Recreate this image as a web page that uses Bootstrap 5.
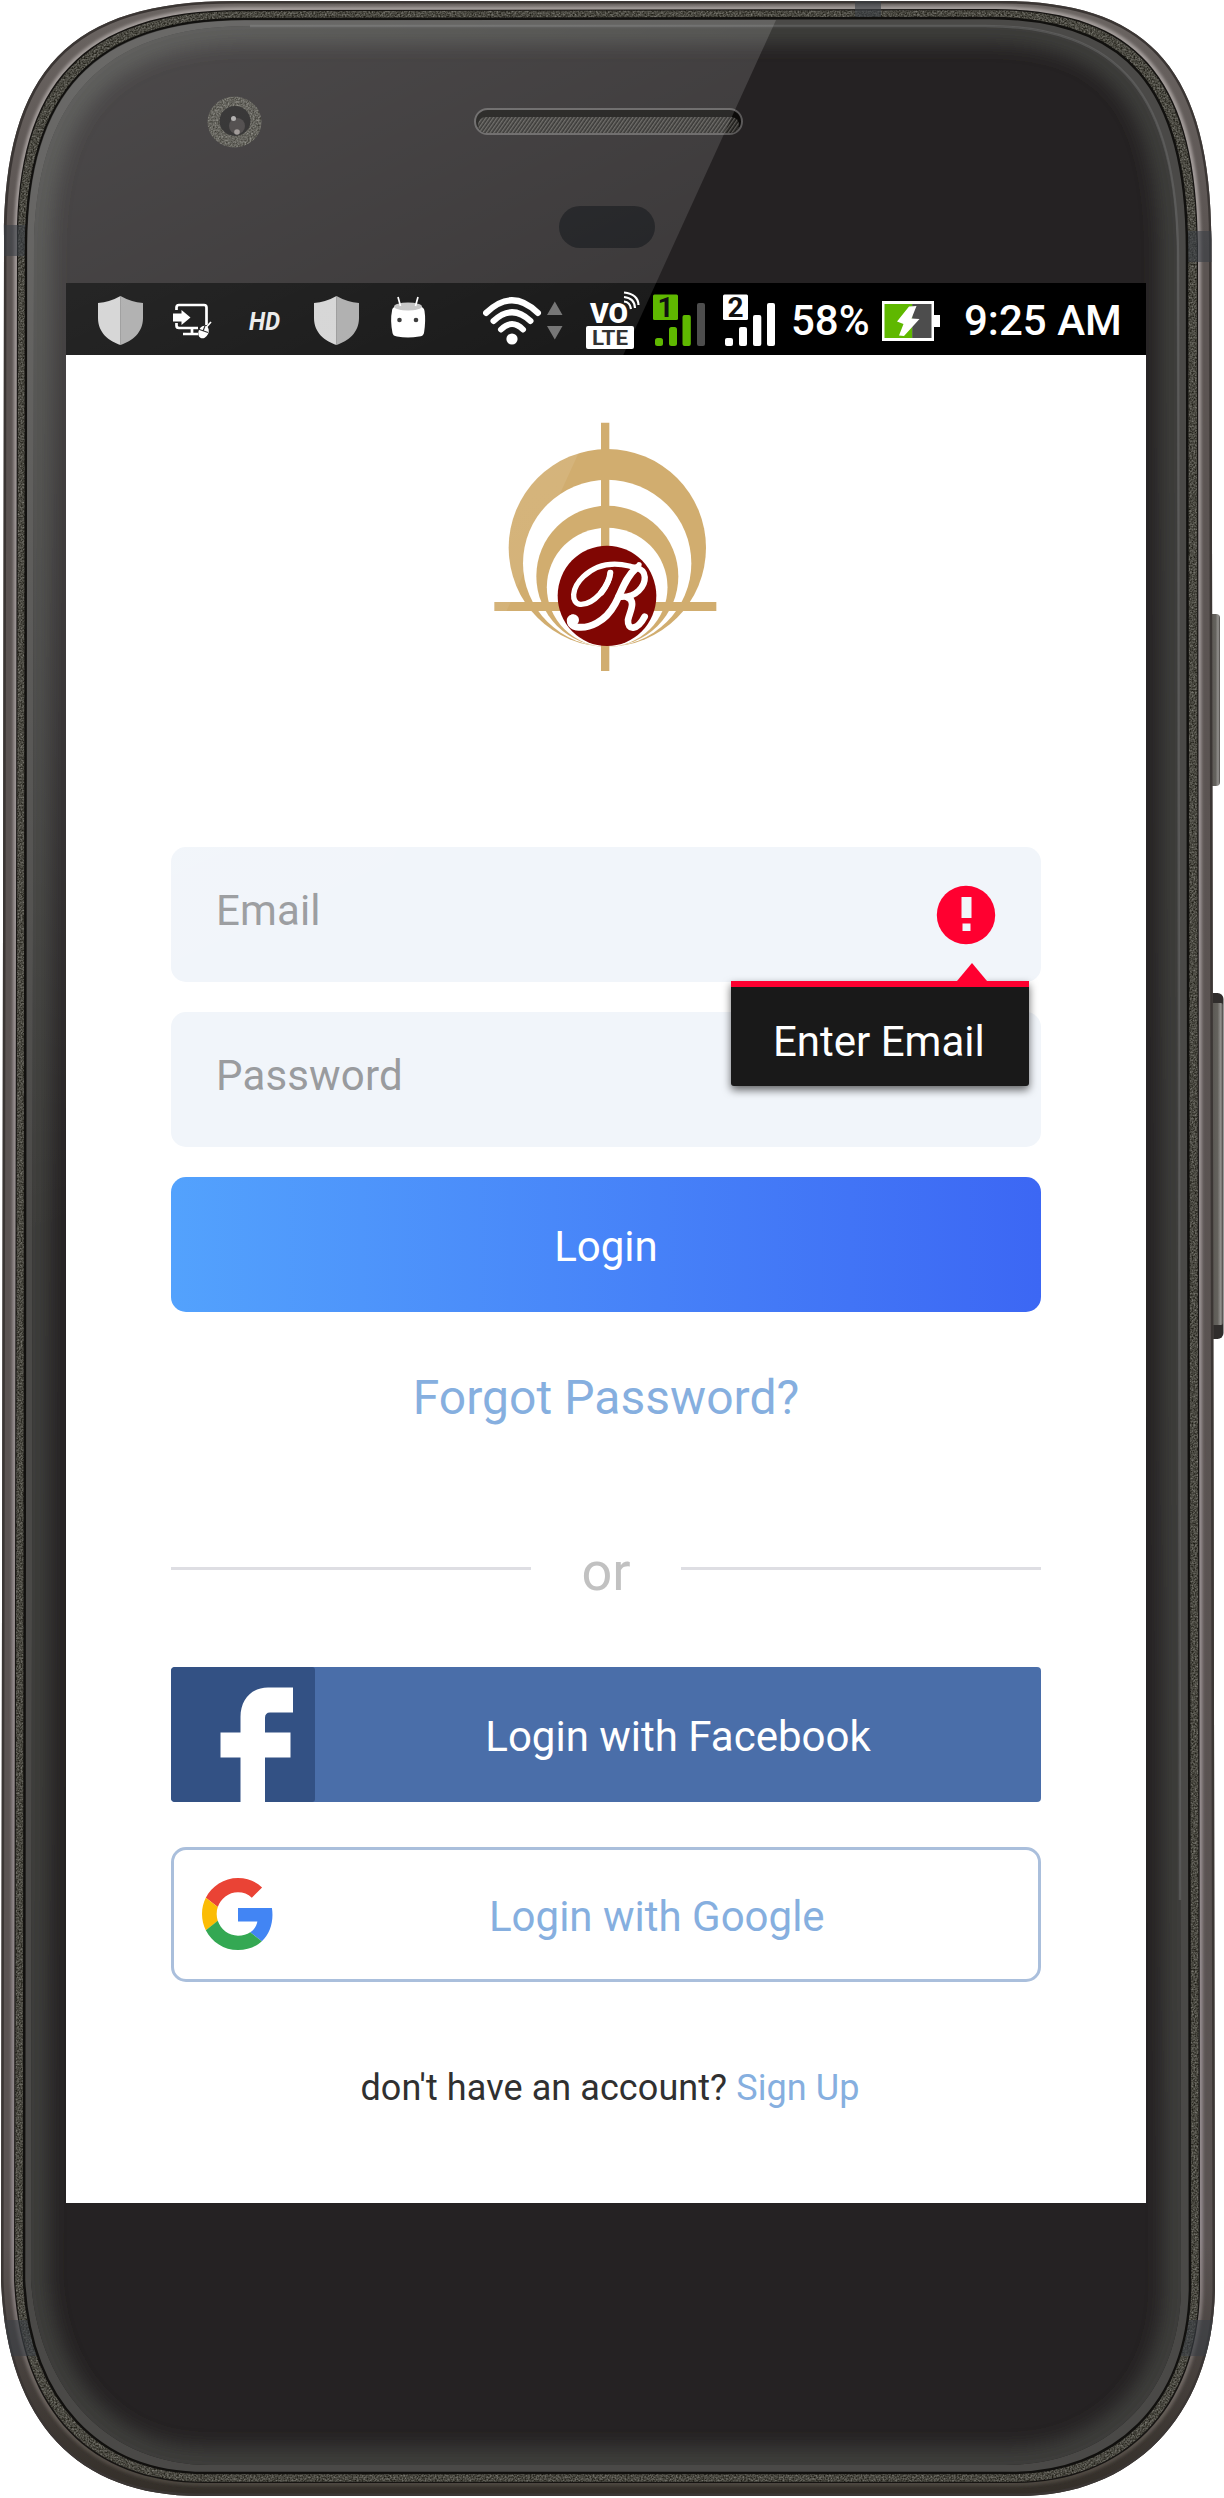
<!DOCTYPE html>
<html lang="en">
<head>
<meta charset="utf-8">
<meta name="viewport" content="width=device-width, initial-scale=1">
<title>Login</title>
<link href="https://cdn.jsdelivr.net/npm/bootstrap@5.3.0/dist/css/bootstrap.min.css" rel="stylesheet">
<style>
body { font-family: Roboto, "Liberation Sans", sans-serif; background: #fff; }
.phone { width: 1224px; height: 2498px; padding: 283px 0 0 66px; }
.shell, .glare { left: 0; top: 0; pointer-events: none; }
.device-screen { width: 1080px; height: 1920px; background: #fff; }
.status-strip { height: 72px; background: #000; color: #fff; font-size: 42px; line-height: 72px; padding-left: 31px; font-weight: 500; }
.status-strip span { white-space: nowrap; }
.login-pane { padding: 67px 105px 0; }
.brand-mark { height: 250px; margin: 0 2px 175px 0; }
.field-box, .field-box:focus { height: 135px; border: 0; border-radius: 15px; background: #f1f5fa; font-size: 42px; padding: 0 45px 8px; color: #333; line-height: 50px; letter-spacing: .15px; }
.field-box::placeholder { color: #999b9e; opacity: 1; }
.form-stack { gap: 30px; }
.err-dot { right: 45px; top: 38px; }
.err-tip { right: 12px; top: 116px; width: 298px; z-index: 3; }
.err-tip-arrow { display: block; margin-left: 226px; }
.err-tip-body { height: 105px; border-top: 6px solid #ff0030; background: #191919; color: #fff; font-size: 42px; line-height: 110px; border-radius: 0 0 3px 3px; box-shadow: 0 4px 9px rgba(0,0,0,.6); padding-left: 42px; white-space: nowrap; }
.btn-tall { height: 135px; font-size: 42px; line-height: 1; border-radius: 15px; }
.btn-enter, .btn-enter:hover { background: linear-gradient(90deg, #53a2fd, #3c67f4); color: #fff; border: 0; padding-top: 10px; }
.soft-link { color: #86afdf; text-decoration: none; }
.forgot { font-size: 48px; line-height: 56px; margin-top: 58px; letter-spacing: .05px; }
.or-line { margin-top: 113px; height: 60px; }
.or-line i { width: 360px; height: 3px; background: #dedee3; margin-top: 28px; }
.or-line span { font-size: 54px; line-height: 65px; color: #c1c1c1; }
.btn-fb, .btn-fb:hover { background: #4a6ea9; color: #fff; border: 0; border-radius: 4px; margin-top: 68px; }
.btn-gg, .btn-gg:hover { border: 3px solid #aabfdc; background: #fff; color: #86afdf; margin-top: 45px; }
.signup { font-size: 36px; line-height: 42px; color: #303030; margin-top: 85px; padding-left: 8px; letter-spacing: .08px; }
</style>
</head>
<body>
<main class="phone position-relative">
  <!-- phone body -->
  <svg class="shell position-absolute" width="1224" height="2498" viewBox="0 0 1224 2498" aria-hidden="true">
    <defs>
      <filter id="grain" x="0" y="0" width="1" height="1" color-interpolation-filters="sRGB">
        <feTurbulence type="fractalNoise" baseFrequency=".6" numOctaves="2" result="n"/>
        <feColorMatrix in="n" type="matrix" values=".55 0 0 0 .015  .55 0 0 0 .01  .55 0 0 0 -.02  0 0 0 0 1"/>
        <feComposite in2="SourceGraphic" operator="in"/>
      </filter>
      <filter id="soft" x="-.1" y="-.1" width="1.2" height="1.2"><feGaussianBlur stdDeviation="9"/></filter>
      <filter id="fine" x="-.1" y="-.1" width="1.2" height="1.2"><feGaussianBlur stdDeviation="1.4"/></filter>
      <path id="rim" d="M4,240 C4,70 70,1 235,1 L1000,1 C1145,1 1211,65 1211.5,240 L1215,2290 C1212,2420 1130,2496 1020,2496 L200,2496 C75,2496 6,2420 1,2280 Z"/>
      <path id="band" d="M17,240 C17,85 82,10 240,10 L995,9 C1135,10 1197,75 1198,245 L1200,2290 C1198,2412 1122,2483 1015,2483 L205,2483 C88,2483 20,2410 14,2280 Z"/>
      <path id="bevel" d="M26,245 C27,95 92,19 245,19 L990,18 C1125,19 1187,85 1187,250 L1190,2290 C1187,2405 1115,2473 1010,2473 L205,2473 C98,2473 30,2400 24,2280 Z"/>
      <path id="glass" d="M34,250 C35,103 100,26 250,26 L985,26 C1120,26 1177,95 1177,260 L1181,2290 C1179,2395 1108,2465 1005,2465 L210,2465 C108,2465 38,2390 31,2280 Z"/>
      <clipPath id="rimClip"><use href="#rim"/></clipPath>
      <clipPath id="glassClip"><use href="#glass"/></clipPath>
      <linearGradient id="lip" x1="0" y1="0" x2="0" y2="1"><stop offset="0" stop-color="#a39c9a"/><stop offset=".9" stop-color="#92898c"/><stop offset=".97" stop-color="#67605a"/><stop offset="1" stop-color="#4c463f"/></linearGradient>
      <linearGradient id="metal" x1="0" y1="0" x2="0" y2="1"><stop offset="0" stop-color="#6a6461"/><stop offset=".1" stop-color="#5b5452"/><stop offset=".9" stop-color="#5a5352"/><stop offset="1" stop-color="#332e28"/></linearGradient>
      <linearGradient id="key" x1="0" y1="0" x2="1" y2="0"><stop offset="0" stop-color="#4e4b47"/><stop offset=".7" stop-color="#64625d"/><stop offset=".88" stop-color="#94928f"/><stop offset="1" stop-color="#4a4744"/></linearGradient>
      <pattern id="mesh" width="3" height="3" patternUnits="userSpaceOnUse" patternTransform="rotate(35)"><rect width="3" height="3" fill="#1c1b19"/><rect width="1.400" height="3" fill="#5b5955"/></pattern>
    </defs>
    <rect x="1205" y="614" width="15" height="172" rx="4" fill="url(#key)"/>
    <rect x="1205" y="993" width="18.500" height="346" rx="6" fill="#302d2c"/>
    <rect x="1205" y="1003" width="18" height="322" rx="2" fill="url(#key)"/>
    <use href="#rim" fill="url(#metal)"/>
    <g clip-path="url(#rimClip)"><use href="#rim" fill="none" stroke="#3b3634" stroke-width="5"/></g>
    <use href="#band" fill="#1b1917" stroke="url(#lip)" stroke-width="6" filter="url(#fine)"/>
    <use href="#band" fill="#161412"/>
    <use href="#band" fill="#4b4943" transform="translate(1.2 1.2) scale(.998 .999)" filter="url(#grain)"/>
    <g fill="#3b4046" opacity=".6" clip-path="url(#rimClip)">
      <rect x="0" y="225" width="26" height="31"/><rect x="1187" y="231" width="26" height="31"/>
      <rect x="855" y="0" width="26" height="18"/>
      <rect x="0" y="2320" width="36" height="36"/><rect x="1180" y="2320" width="36" height="36"/>
    </g>
    <use href="#bevel" fill="#4a4947" stroke="#11100e" stroke-width="2.500"/>
    <use href="#glass" fill="#252223"/>
    <g clip-path="url(#glassClip)"><use href="#glass" fill="none" stroke="#3d3d3a" stroke-width="36" filter="url(#soft)"/></g>
    <path d="M1180,1900 L1178,260 C1178,95 1120,26 985,26 L250,26" fill="none" stroke="#6a6a69" stroke-width="2.500" opacity=".55"/>

    <ellipse cx="234.500" cy="122" rx="27" ry="25.500" fill="#555" filter="url(#grain)"/>
    <ellipse cx="235" cy="121" rx="15.500" ry="15" fill="#141313"/>
    <circle cx="237" cy="126" r="8" fill="#353131"/><circle cx="233.500" cy="118.500" r="2.500" fill="#a5a3a2"/><circle cx="237" cy="132" r="2.800" fill="#918a87"/>
    <rect x="475" y="109" width="267" height="25" rx="12.500" fill="#0c0b09" stroke="#5b5959" stroke-width="2"/>
    <rect x="478" y="117" width="261" height="16" rx="8" fill="url(#mesh)"/>
    <rect x="559" y="206" width="96" height="42" rx="21" fill="#0a0b0e"/>
  </svg>

  <div class="device-screen position-relative">
    <header class="status-strip d-flex">
      <svg width="331" height="72" viewBox="97 283 331 72" aria-hidden="true">
        <g id="shield"><path d="M120.500,296 Q131,302 143,303 V318 C143,333 132,341 120.500,345 Z" fill="#a6a6a6"/><path d="M120.500,296 Q110,302 98,303 V318 C98,333 109,341 120.500,345 Z" fill="#d1d1d1"/></g>
        <use href="#shield" x="216"/>
        <path d="M176.500,310 V307.500 Q176.500,305 179,305 H204 Q206.500,305 206.500,307.500 V325 M176.500,323 V325.500 Q176.500,328 179,328 H198 M192,328 V334 M183,334 H198" fill="none" stroke="#fff" stroke-width="2.700"/>
        <path d="M173,313.500 H181.500 V310 L190.500,317.500 L181.500,325 V321.500 H173 Z" fill="#fff"/>
        <ellipse cx="203.500" cy="332" rx="5" ry="6.500" transform="rotate(25 203.500 332)" fill="#fff"/><path d="M198,329 L208,332.500 M205,326 L203,331 M207,326 L211,322" stroke="#111" stroke-width="1.200"/><path d="M206.500,327 L211,322" stroke="#fff" stroke-width="1.600"/>
        <text x="249" y="329.500" font-size="26" font-weight="700" font-style="italic" fill="#e9e9e9" textLength="31" lengthAdjust="spacingAndGlyphs">HD</text>
        <path d="M392,311 Q392,307 396,306.500 Q408,302 420,306.500 Q424,307 424.500,311 Q426,320 424,333 Q423,336.500 419,336.500 Q408,338.500 397,336.500 Q393,336 392.500,333 Q390,320 392,311Z" fill="#fff"/>
        <ellipse cx="408" cy="306.500" rx="14" ry="4" fill="#bfbfbf"/><path d="M398,297 L400.500,306 M418,297 L415.500,306" stroke="#fff" stroke-width="1.700"/><circle cx="399.500" cy="320" r="2.300" fill="#222"/><circle cx="416" cy="320" r="2.300" fill="#222"/>
      </svg>
      <svg class="ms-auto" width="293" height="72" viewBox="483 283 293 72" aria-hidden="true">
        <g fill="none" stroke="#fff" stroke-width="6" stroke-linecap="round"><path d="M486,313 Q512,287.500 538,313"/><path d="M493.500,321 Q512,303.500 530.500,321"/><path d="M501,329.500 Q512,318.500 523,329.500"/></g>
        <circle cx="512" cy="339" r="5.600" fill="#fff"/>
        <path d="M554.800,301.500 L562.500,315 H547Z M554.800,339.500 L562.500,326 H547Z" fill="#666"/>
        <text x="590" y="322.500" font-size="27" font-weight="900" fill="#fff" textLength="38" lengthAdjust="spacingAndGlyphs">VO</text>
        <g fill="none" stroke="#fff" stroke-width="2.200"><path d="M624,301.500 Q630,302 631,309"/><path d="M624,297 Q634.500,298 635,308"/><path d="M624,292.500 Q638,294 638.500,305"/></g>
        <rect x="586" y="326" width="48" height="23" rx="2" fill="#fff"/><text x="592" y="345" font-size="21" font-weight="700" fill="#1a1a1a" textLength="36" lengthAdjust="spacingAndGlyphs">LTE</text>
        <g fill="#5fb800"><rect x="653" y="294.500" width="25" height="25.500" rx="1.500"/><rect x="655" y="338" width="8" height="8" rx="2.500"/><rect x="669" y="327" width="8" height="19" rx="2.500"/><rect x="682.500" y="315" width="8.300" height="31" rx="2"/></g><rect x="697" y="303" width="8" height="43" rx="2" fill="#4d4d4d"/>
        <text x="665.500" y="317" font-size="28" font-weight="700" text-anchor="middle" fill="#111">1</text>
        <g fill="#fff"><rect x="723" y="294.500" width="25" height="25.500" rx="1.500"/><rect x="725" y="338" width="8" height="8" rx="2"/><rect x="739" y="327" width="8" height="19" rx="2"/><rect x="753" y="315" width="8.300" height="31" rx="2"/><rect x="767" y="303" width="8" height="43" rx="2"/></g>
        <text x="735.500" y="317" font-size="28" font-weight="700" text-anchor="middle" fill="#111">2</text>
      </svg>
      <span style="margin-left:15px;width:91px;padding-top:2px">58%</span>
      <svg width="58" height="72" viewBox="882 283 58 72" aria-hidden="true"><path d="M882,301 H934 V315 H940 V327 H934 V341 H882Z" fill="#fff"/><rect x="884.500" y="304" width="28" height="34" fill="#5fb800"/><rect x="912.200" y="304" width="19.300" height="34" fill="#4d4d4d"/><path d="M909,306.500 L916.500,306 L911.500,318.500 L919.500,319 L904,336 L899,335.500 L903.500,324 L897,321.500Z" fill="#fff"/></svg>
      <span style="margin-left:24px;width:182px;padding-top:2px">9:25 AM</span>
    </header>

    <div class="login-pane">
      <div class="d-flex justify-content-center">
        <svg class="brand-mark" width="223" viewBox="74 66 669 750" role="img" aria-label="Brand logo">
          <ellipse cx="414" cy="443.500" rx="296" ry="296.500" fill="#d1ad6f"/>
          <ellipse cx="413.500" cy="489.500" rx="252.500" ry="250" fill="#fff"/>
          <ellipse cx="414" cy="528.500" rx="213" ry="211" fill="#d1ad6f"/>
          <ellipse cx="413.500" cy="561.500" rx="181" ry="178.500" fill="#fff"/>
          <path d="M395,68 H420 V813 H395Z M75,606 H741 V633 H75Z" fill="#d1ad6f"/>
          <ellipse cx="413" cy="587.500" rx="148" ry="150.500" fill="#800603"/>
          <g fill="none" stroke="#fff" stroke-linecap="round" stroke-linejoin="round" stroke-width="16">
            <path d="M509,494 Q504,506 480,498 C430,486 380,494 342,530 C305,565 305,609 332,613 C372,616 420,560 423,518"/>
            <path d="M498,507 C468,532 455,580 437,612 C408,666 358,687 322,681 C300,676 298,656 309,654" stroke-width="21"/>
            <path d="M501,504 C534,510 533,548 508,572 C494,586 470,592 447,590" stroke-width="19"/>
            <path d="M474,592 C502,602 481,636 476,660 C474,692 504,692 526,650" stroke-width="20"/>
            <path d="M423,518 C421,540 408,562 396,578" stroke-width="18"/>
          </g>
          <circle cx="312" cy="660" r="17" fill="#fff"/>
        </svg>
      </div>

      <form class="d-flex flex-column form-stack">
        <div class="position-relative">
          <input class="form-control field-box" type="email" placeholder="Email" aria-label="Email">
          <svg class="err-dot position-absolute" width="60" height="60" viewBox="0 0 60 60" aria-hidden="true"><circle cx="30" cy="30" r="29.200" fill="#ff0030"/><path d="M25.500,12 H35.500 V33 H25.500Z M26.500,38.500 H34.500 V46 H26.500Z" fill="#f1f5fa"/></svg>
          <div class="err-tip position-absolute">
            <svg class="err-tip-arrow" width="30" height="18" viewBox="0 0 30 18"><path d="M15,0 L30,18 H0Z" fill="#ff0030"/></svg>
            <div class="err-tip-body">Enter Email</div>
          </div>
        </div>
        <input class="form-control field-box" type="password" placeholder="Password" aria-label="Password">
        <button class="btn btn-tall btn-enter" type="button">Login</button>
      </form>

      <div class="text-center forgot"><a class="soft-link" href="#">Forgot Password?</a></div>
      <div class="or-line d-flex justify-content-between"><i></i><span>or</span><i></i></div>

      <button class="btn btn-tall btn-fb w-100 p-0 d-flex align-items-center overflow-hidden" type="button">
        <svg width="144" height="135" viewBox="0 0 144 135" aria-hidden="true"><rect width="144" height="135" rx="3" fill="#335184"/><path d="M69.500,135 V90.500 H49.500 V65.500 H69.500 V50 C69.500,32 81,20.500 97,20.500 H122 V45.500 H99 Q94,45.500 94,51 V65.500 H119.500 V90.500 H94 V135Z" fill="#fff"/></svg>
        <span class="flex-fill text-center pt-1">Login with Facebook</span>
      </button>
      <button class="btn btn-tall btn-gg w-100 p-0 d-flex align-items-center" type="button">
        <svg style="margin:0 0 1px 28px" width="72" height="72" viewBox="0 0 48 48" aria-hidden="true"><path fill="#ea4335" d="M24 9.500c3.540 0 6.710 1.220 9.210 3.600l6.850-6.850C35.900 2.380 30.470 0 24 0 14.620 0 6.510 5.380 2.560 13.220l7.980 6.190C12.430 13.720 17.740 9.500 24 9.500z"/><path fill="#4285f4" d="M46.980 24.550c0-1.570-.15-3.090-.38-4.550H24v9.020h12.940c-.58 2.960-2.260 5.480-4.780 7.180l7.730 6c4.510-4.180 7.090-10.360 7.090-17.650z"/><path fill="#fbbc05" d="M10.530 28.590c-.48-1.450-.76-2.990-.76-4.590s.27-3.140.76-4.590l-7.980-6.190C.92 16.460 0 20.120 0 24s.92 7.540 2.560 10.780l7.970-6.190z"/><path fill="#34a853" d="M24 48c6.480 0 11.930-2.130 15.890-5.810l-7.730-6c-2.150 1.450-4.920 2.300-8.160 2.300-6.260 0-11.570-4.220-13.470-9.910l-7.980 6.190C6.510 42.620 14.620 48 24 48z"/></svg>
        <span class="pt-1" style="margin-left:215px">Login with Google</span>
      </button>
      <div class="signup text-center">don't have an account? <a class="soft-link" href="#">Sign Up</a></div>
    </div>
  </div>

  <!-- diagonal reflection across the glass -->
  <svg class="glare position-absolute" width="1224" height="1600" viewBox="0 0 1224 1600" aria-hidden="true">
    <defs><linearGradient id="shine" gradientUnits="userSpaceOnUse" x1="100" y1="0" x2="560" y2="1000"><stop offset="0" stop-color="#fff" stop-opacity=".185"/><stop offset=".5" stop-color="#fff" stop-opacity=".1"/><stop offset="1" stop-color="#fff" stop-opacity="0"/></linearGradient></defs>
    <path d="M776,20 L66,1577 L27,1577 L27,245 C28,95 92,20 245,20 Z" fill="url(#shine)"/>
  </svg>
</main>
<script src="https://cdn.jsdelivr.net/npm/bootstrap@5.3.0/dist/js/bootstrap.bundle.min.js"></script>
</body>
</html>
